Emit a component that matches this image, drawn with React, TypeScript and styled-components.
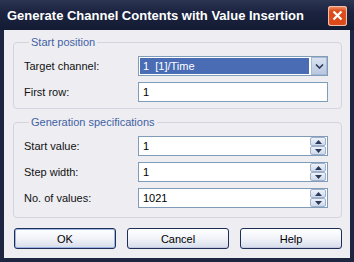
import styled, { createGlobalStyle } from 'styled-components';

const Global = createGlobalStyle`
  html, body {
    margin: 0;
    padding: 0;
    background: #ffffff;
  }
  * {
    box-sizing: border-box;
  }
`;

const Window = styled.div`
  width: 354px;
  height: 262px;
  background: #1d2540;
  display: flex;
  flex-direction: column;
  font-family: 'Liberation Sans', Arial, sans-serif;
  font-size: 11px;
  color: #000;
`;

const TitleBar = styled.div`
  height: 30px;
  display: flex;
  align-items: center;
  padding: 1px 7px 0 7px;
  background: linear-gradient(#2c3552, #1b2340 40%, #141b33);
`;

const Title = styled.div`
  flex: 1;
  color: #ffffff;
  font-weight: bold;
  font-size: 13px;
  white-space: nowrap;
  overflow: hidden;
`;

const CloseBox = styled.span`
  flex: none;
  display: flex;
  align-items: center;
  justify-content: center;
  width: 19px;
  height: 20px;
  border-radius: 3px;
  background: #dc4a1a;
  box-shadow: inset 0 0 0 1px #f0c0ae, inset 0 3px 3px #f28a5e;
`;

const Body = styled.div`
  flex: 1;
  margin: 0 4px 4px 4px;
  background: #eeedf2;
  padding: 6px 8px 0 9px;
  display: flex;
  flex-direction: column;
  gap: 7px;
`;

const Group = styled.fieldset<{ $bottom: number }>`
  margin: 0;
  border: 1px solid #d5d3dd;
  border-radius: 4px;
  padding: 7px 13px ${(p) => p.$bottom}px 10px;
  display: grid;
  grid-template-columns: 114px 190px;
  row-gap: 6px;
  align-items: center;
`;

const Legend = styled.legend`
  color: #3f62a3;
  padding: 0 2px;
  margin-left: 5px;
  line-height: 13px;
`;

const Label = styled.span`
  white-space: nowrap;
  color: #111;
`;

const Field = styled.div`
  height: 20px;
  border: 1px solid #7f9db9;
  background: #ffffff;
  display: flex;
  align-items: center;
`;

const Value = styled.span`
  flex: 1;
  padding-left: 4px;
`;

const Selected = styled.span`
  flex: 1;
  height: 16px;
  margin: 1px 2px 1px 1px;
  background: #4a6cb5;
  color: #ffffff;
  padding-left: 3px;
  line-height: 16px;
  white-space: pre;
`;

const DropButton = styled.span`
  width: 16px;
  height: 18px;
  background: linear-gradient(#d9e2f0, #b9c8e0);
  border: 1px solid #a9b9d4;
  display: flex;
  align-items: center;
  justify-content: center;
`;

const Spin = styled.span`
  width: 16px;
  height: 18px;
  margin-right: 1px;
  display: flex;
  flex-direction: column;
`;

const SpinHalf = styled.span`
  flex: 1;
  border: 1px solid #9fb0cc;
  border-radius: 2px;
  background: linear-gradient(#eef2f8, #cfd9ea);
  display: flex;
  align-items: center;
  justify-content: center;
`;

const Buttons = styled.div`
  display: flex;
  gap: 11px;
  margin-top: 3px;
  padding-left: 1px;
`;

const Button = styled.button<{ $default?: boolean }>`
  width: 102px;
  height: 21px;
  font-family: 'Liberation Sans', Arial, sans-serif;
  font-size: 11px;
  color: #000;
  border: 1px solid #1e2f56;
  border-radius: 3px;
  background: linear-gradient(#ffffff, #f1f3f8 50%, #d6dcea);
  box-shadow: ${(p) =>
    p.$default ? 'inset 0 0 0 1px #9db5e4' : 'inset 0 -1px 0 #c3cbe0'};
  padding: 0;
`;

const Chevron = () => (
  <svg width="9" height="5" viewBox="0 0 9 5">
    <path d="M1 0.5 L4.5 4 L8 0.5" fill="none" stroke="#2b3a5c" strokeWidth="1.6" />
  </svg>
);

const Spinner = () => (
  <Spin>
    <SpinHalf>
      <svg width="7" height="4" viewBox="0 0 7 4">
        <path d="M0 4 L3.5 0 L7 4 Z" fill="#2b3a5c" />
      </svg>
    </SpinHalf>
    <SpinHalf>
      <svg width="7" height="4" viewBox="0 0 7 4">
        <path d="M0 0 L3.5 4 L7 0 Z" fill="#2b3a5c" />
      </svg>
    </SpinHalf>
  </Spin>
);

const App = () => {
  return (
    <>
      <Global />
      <Window>
        <TitleBar>
          <Title>Generate Channel Contents with Value Insertion</Title>
          <CloseBox>
            <svg width="11" height="11" viewBox="0 0 11 11">
              <path d="M1.5 1.5 L9.5 9.5 M9.5 1.5 L1.5 9.5" stroke="#ffffff" strokeWidth="2.2" />
            </svg>
          </CloseBox>
        </TitleBar>
        <Body>
          <Group $bottom={6}>
            <Legend>Start position</Legend>
            <Label>Target channel:</Label>
            <Field>
              <Selected>{'1  [1]/Time'}</Selected>
              <DropButton>
                <Chevron />
              </DropButton>
            </Field>
            <Label>First row:</Label>
            <Field>
              <Value>1</Value>
            </Field>
          </Group>
          <Group $bottom={9}>
            <Legend>Generation specifications</Legend>
            <Label>Start value:</Label>
            <Field>
              <Value>1</Value>
              <Spinner />
            </Field>
            <Label>Step width:</Label>
            <Field>
              <Value>1</Value>
              <Spinner />
            </Field>
            <Label>No. of values:</Label>
            <Field>
              <Value>1021</Value>
              <Spinner />
            </Field>
          </Group>
          <Buttons>
            <Button $default>OK</Button>
            <Button>Cancel</Button>
            <Button>Help</Button>
          </Buttons>
        </Body>
      </Window>
    </>
  );
};

export default App;
